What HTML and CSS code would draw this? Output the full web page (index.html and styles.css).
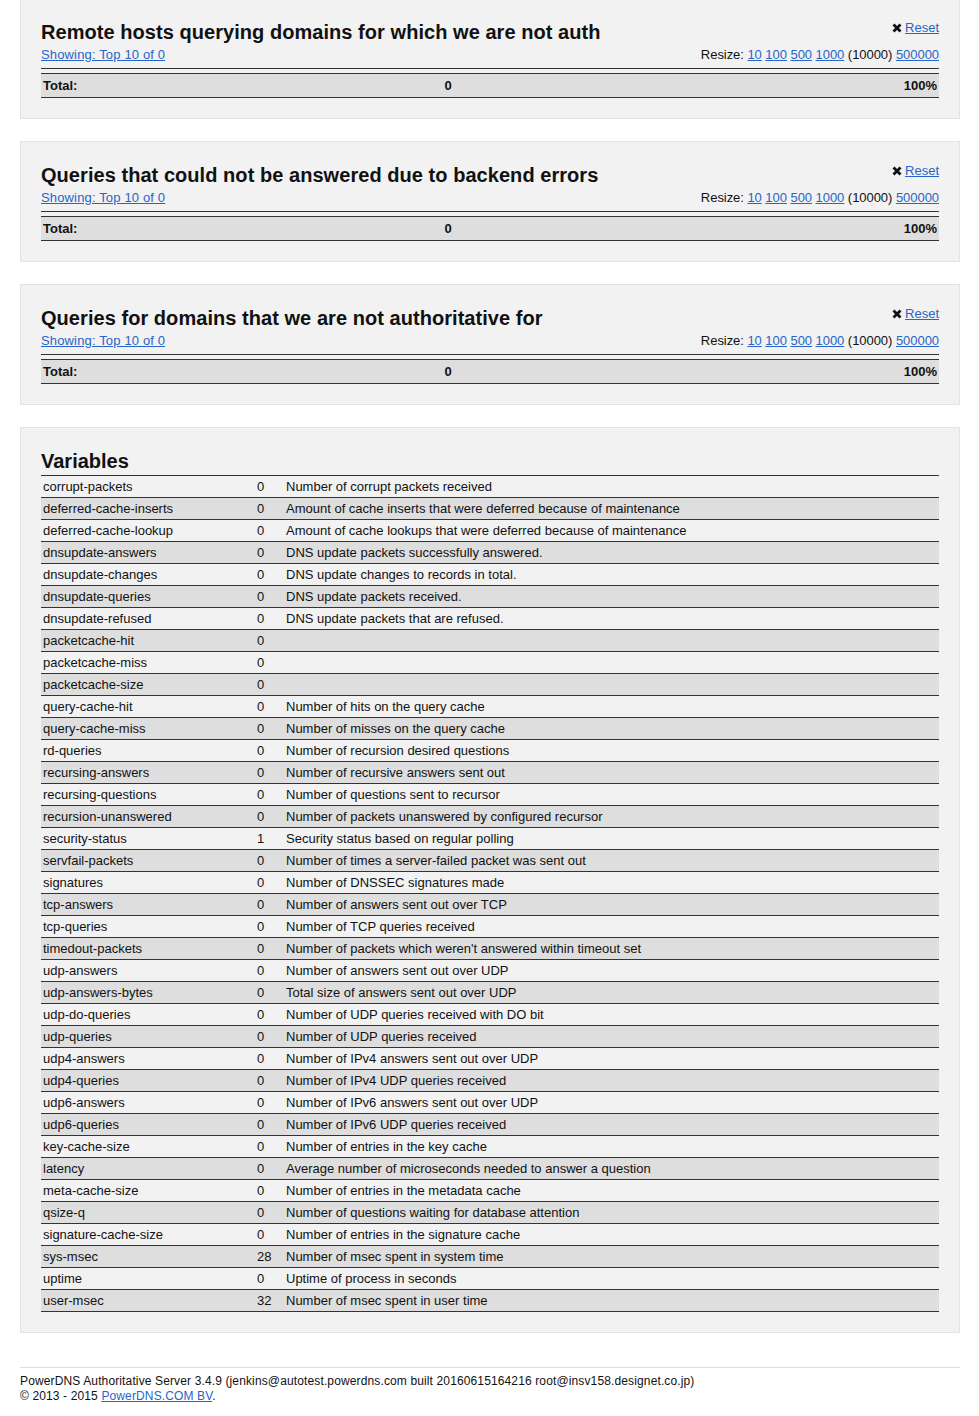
FILE: index.html
```html
<!DOCTYPE html>
<html>
<head>
<meta charset="utf-8">
<title>PowerDNS Authoritative Server</title>
<link rel="stylesheet" href="styles.css">
</head>
<body>
<div class="wrap">

  <div class="panel">
    <div class="head">
      <div class="head-left">
        <h2 class="title">Remote hosts querying domains for which we are not auth</h2>
        <a href="#" class="link">Showing: Top 10 of 0</a>
      </div>
      <div class="head-right">
        <div class="reset"><svg class="x" viewBox="0 0 10 10" width="10" height="10"><path d="M1.5 1.5 L8.5 8.5 M8.5 1.5 L1.5 8.5" stroke="#111" stroke-width="2.8" stroke-linecap="butt"/></svg><a href="#" class="link">Reset</a></div>
        <div class="resize">Resize: <a href="#" class="link">10</a> <a href="#" class="link">100</a> <a href="#" class="link">500</a> <a href="#" class="link">1000</a> (10000) <a href="#" class="link">500000</a></div>
      </div>
    </div>
    <div class="total"><span class="t1">Total:</span><span class="t2">0</span><span class="t3">100%</span></div>
  </div>

  <div class="panel">
    <div class="head">
      <div class="head-left">
        <h2 class="title">Queries that could not be answered due to backend errors</h2>
        <a href="#" class="link">Showing: Top 10 of 0</a>
      </div>
      <div class="head-right">
        <div class="reset"><svg class="x" viewBox="0 0 10 10" width="10" height="10"><path d="M1.5 1.5 L8.5 8.5 M8.5 1.5 L1.5 8.5" stroke="#111" stroke-width="2.8" stroke-linecap="butt"/></svg><a href="#" class="link">Reset</a></div>
        <div class="resize">Resize: <a href="#" class="link">10</a> <a href="#" class="link">100</a> <a href="#" class="link">500</a> <a href="#" class="link">1000</a> (10000) <a href="#" class="link">500000</a></div>
      </div>
    </div>
    <div class="total"><span class="t1">Total:</span><span class="t2">0</span><span class="t3">100%</span></div>
  </div>

  <div class="panel">
    <div class="head">
      <div class="head-left">
        <h2 class="title">Queries for domains that we are not authoritative for</h2>
        <a href="#" class="link">Showing: Top 10 of 0</a>
      </div>
      <div class="head-right">
        <div class="reset"><svg class="x" viewBox="0 0 10 10" width="10" height="10"><path d="M1.5 1.5 L8.5 8.5 M8.5 1.5 L1.5 8.5" stroke="#111" stroke-width="2.8" stroke-linecap="butt"/></svg><a href="#" class="link">Reset</a></div>
        <div class="resize">Resize: <a href="#" class="link">10</a> <a href="#" class="link">100</a> <a href="#" class="link">500</a> <a href="#" class="link">1000</a> (10000) <a href="#" class="link">500000</a></div>
      </div>
    </div>
    <div class="total"><span class="t1">Total:</span><span class="t2">0</span><span class="t3">100%</span></div>
  </div>

  <div class="panel">
    <h2 class="vtitle">Variables</h2>
    <table class="vars">
      <tr><td class="n">corrupt-packets</td><td class="v">0</td><td class="d">Number of corrupt packets received</td></tr>
      <tr><td class="n">deferred-cache-inserts</td><td class="v">0</td><td class="d">Amount of cache inserts that were deferred because of maintenance</td></tr>
      <tr><td class="n">deferred-cache-lookup</td><td class="v">0</td><td class="d">Amount of cache lookups that were deferred because of maintenance</td></tr>
      <tr><td class="n">dnsupdate-answers</td><td class="v">0</td><td class="d">DNS update packets successfully answered.</td></tr>
      <tr><td class="n">dnsupdate-changes</td><td class="v">0</td><td class="d">DNS update changes to records in total.</td></tr>
      <tr><td class="n">dnsupdate-queries</td><td class="v">0</td><td class="d">DNS update packets received.</td></tr>
      <tr><td class="n">dnsupdate-refused</td><td class="v">0</td><td class="d">DNS update packets that are refused.</td></tr>
      <tr><td class="n">packetcache-hit</td><td class="v">0</td><td class="d"></td></tr>
      <tr><td class="n">packetcache-miss</td><td class="v">0</td><td class="d"></td></tr>
      <tr><td class="n">packetcache-size</td><td class="v">0</td><td class="d"></td></tr>
      <tr><td class="n">query-cache-hit</td><td class="v">0</td><td class="d">Number of hits on the query cache</td></tr>
      <tr><td class="n">query-cache-miss</td><td class="v">0</td><td class="d">Number of misses on the query cache</td></tr>
      <tr><td class="n">rd-queries</td><td class="v">0</td><td class="d">Number of recursion desired questions</td></tr>
      <tr><td class="n">recursing-answers</td><td class="v">0</td><td class="d">Number of recursive answers sent out</td></tr>
      <tr><td class="n">recursing-questions</td><td class="v">0</td><td class="d">Number of questions sent to recursor</td></tr>
      <tr><td class="n">recursion-unanswered</td><td class="v">0</td><td class="d">Number of packets unanswered by configured recursor</td></tr>
      <tr><td class="n">security-status</td><td class="v">1</td><td class="d">Security status based on regular polling</td></tr>
      <tr><td class="n">servfail-packets</td><td class="v">0</td><td class="d">Number of times a server-failed packet was sent out</td></tr>
      <tr><td class="n">signatures</td><td class="v">0</td><td class="d">Number of DNSSEC signatures made</td></tr>
      <tr><td class="n">tcp-answers</td><td class="v">0</td><td class="d">Number of answers sent out over TCP</td></tr>
      <tr><td class="n">tcp-queries</td><td class="v">0</td><td class="d">Number of TCP queries received</td></tr>
      <tr><td class="n">timedout-packets</td><td class="v">0</td><td class="d">Number of packets which weren't answered within timeout set</td></tr>
      <tr><td class="n">udp-answers</td><td class="v">0</td><td class="d">Number of answers sent out over UDP</td></tr>
      <tr><td class="n">udp-answers-bytes</td><td class="v">0</td><td class="d">Total size of answers sent out over UDP</td></tr>
      <tr><td class="n">udp-do-queries</td><td class="v">0</td><td class="d">Number of UDP queries received with DO bit</td></tr>
      <tr><td class="n">udp-queries</td><td class="v">0</td><td class="d">Number of UDP queries received</td></tr>
      <tr><td class="n">udp4-answers</td><td class="v">0</td><td class="d">Number of IPv4 answers sent out over UDP</td></tr>
      <tr><td class="n">udp4-queries</td><td class="v">0</td><td class="d">Number of IPv4 UDP queries received</td></tr>
      <tr><td class="n">udp6-answers</td><td class="v">0</td><td class="d">Number of IPv6 answers sent out over UDP</td></tr>
      <tr><td class="n">udp6-queries</td><td class="v">0</td><td class="d">Number of IPv6 UDP queries received</td></tr>
      <tr><td class="n">key-cache-size</td><td class="v">0</td><td class="d">Number of entries in the key cache</td></tr>
      <tr><td class="n">latency</td><td class="v">0</td><td class="d">Average number of microseconds needed to answer a question</td></tr>
      <tr><td class="n">meta-cache-size</td><td class="v">0</td><td class="d">Number of entries in the metadata cache</td></tr>
      <tr><td class="n">qsize-q</td><td class="v">0</td><td class="d">Number of questions waiting for database attention</td></tr>
      <tr><td class="n">signature-cache-size</td><td class="v">0</td><td class="d">Number of entries in the signature cache</td></tr>
      <tr><td class="n">sys-msec</td><td class="v">28</td><td class="d">Number of msec spent in system time</td></tr>
      <tr><td class="n">uptime</td><td class="v">0</td><td class="d">Uptime of process in seconds</td></tr>
      <tr><td class="n">user-msec</td><td class="v">32</td><td class="d">Number of msec spent in user time</td></tr>
    </table>
  </div>

  <div class="footer">
    PowerDNS Authoritative Server 3.4.9 (jenkins@autotest.powerdns.com built 20160615164216 root@insv158.designet.co.jp)<br>
    &copy; 2013 - 2015 <a href="#" class="link">PowerDNS.COM BV</a>.
  </div>

</div>
</body>
</html>
```

FILE: styles.css
```css
html, body {
  margin: 0;
  padding: 0;
  background: #ffffff;
}

body {
  font-family: "Liberation Sans", Arial, sans-serif;
  font-size: 13px;
  color: #111;
}

.wrap {
  width: 940px;
  margin: -2px 0 0 20px;
}

.panel {
  background: #f2f2f2;
  border: 1px solid #e3e3e3;
  padding: 20px;
  margin-bottom: 22px;
}

.link {
  color: #2765c8;
  text-decoration: underline;
}

.head {
  display: flex;
  justify-content: space-between;
  border-bottom: 1px solid #333;
  padding-bottom: 5px;
}

.head-left {
  display: flex;
  flex-direction: column;
  align-items: flex-start;
}

.title {
  margin: 0;
  font-size: 20px;
  line-height: 27px;
  font-weight: bold;
  color: #111;
  white-space: nowrap;
  letter-spacing: 0.05px;
}

.head-left .link {
  line-height: 17px;
  letter-spacing: 0.15px;
}

.head-right {
  display: flex;
  flex-direction: column;
  justify-content: space-between;
  align-items: flex-end;
  text-align: right;
}

.reset {
  line-height: 16px;
  display: flex;
  align-items: center;
  gap: 3px;
  padding-top: 1px;
}

.x {
  display: block;
}

.resize {
  line-height: 17px;
  white-space: nowrap;
  letter-spacing: -0.05px;
}

.total {
  margin-top: 4px;
  border-top: 1px solid #333;
  border-bottom: 1px solid #333;
  background: #dedede;
  height: 23px;
  display: grid;
  grid-template-columns: 360px 94px 1fr;
  align-items: center;
  font-weight: bold;
}

.t1 {
  padding-left: 2px;
}

.t2 {
  text-align: center;
}

.t3 {
  text-align: right;
  padding-right: 2px;
}

.vtitle {
  margin: 0;
  font-size: 20px;
  line-height: 27px;
  font-weight: bold;
  color: #111;
}

.vars {
  width: 100%;
  border-collapse: collapse;
  border-top: 1px solid #333;
}

.vars td {
  padding: 0 0 0 2px;
  height: 21px;
  line-height: 15px;
  border-bottom: 1px solid #333;
  vertical-align: middle;
  white-space: nowrap;
}

.vars tr:nth-child(even) td {
  background: #dedede;
}

.vars td.n {
  width: 212px;
}

.vars td.v {
  width: 27px;
}

.footer {
  margin-top: 34px;
  border-top: 1px solid #dddddd;
  padding-top: 6px;
  font-size: 12px;
  line-height: 15px;
  color: #111;
  letter-spacing: 0.13px;
}
```
